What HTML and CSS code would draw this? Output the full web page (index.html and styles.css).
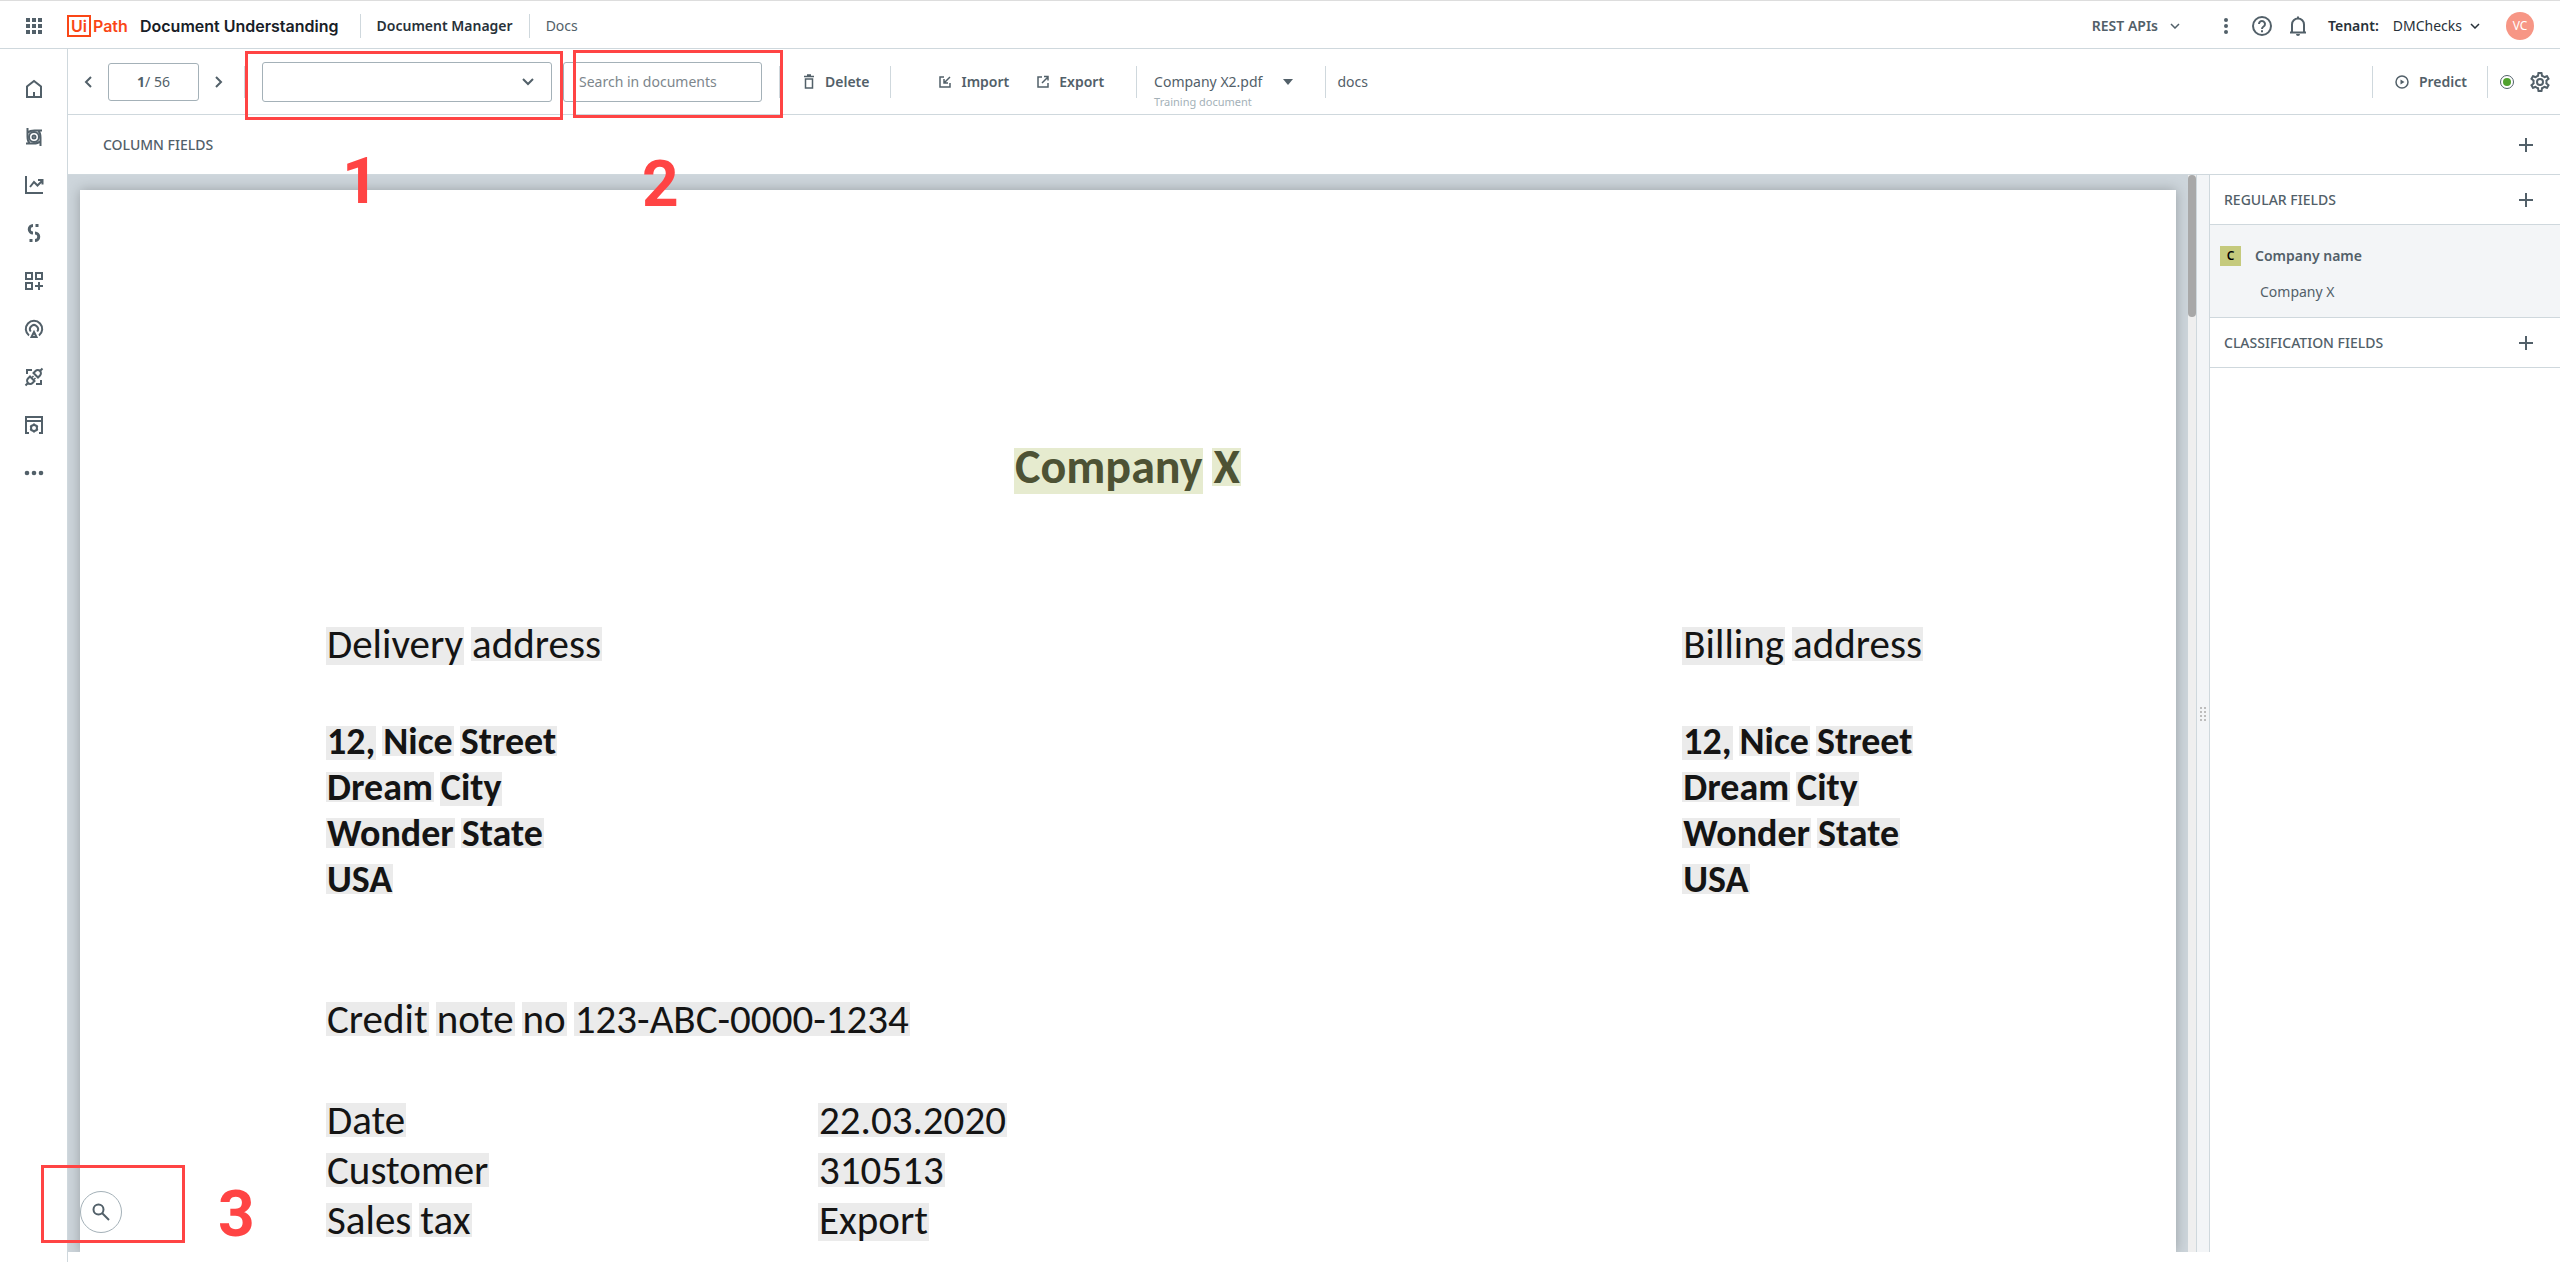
FILE: index.html
```html
<!DOCTYPE html>
<html lang="en">
<head>
<meta charset="utf-8">
<title>Document Understanding - Document Manager</title>
<link rel="stylesheet" href="styles.css">
</head>
<body>
<header class="header">
  <button class="icon-btn launcher" aria-label="Apps">
    <svg width="16" height="16" viewBox="0 0 16 16" fill="currentColor"><path d="M0 0h4v4H0zM6 0h4v4H6zM12 0h4v4h-4zM0 6h4v4H0zM6 6h4v4H6zM12 6h4v4h-4zM0 12h4v4H0zM6 12h4v4H6zM12 12h4v4h-4z"/></svg>
  </button>
  <a class="brand" href="#"><span class="brand-ui">Ui</span><span class="brand-path">Path</span><span class="brand-product">Document Understanding</span></a>
  <span class="rule rule-short"></span>
  <nav class="crumbs">
    <a class="crumb-current" href="#">Document Manager</a>
    <span class="rule rule-short"></span>
    <a class="crumb" href="#">Docs</a>
  </nav>
  <div class="header-right">
    <button class="menu-btn strong apis">REST APIs
      <svg width="10" height="6" viewBox="0 0 10 6" class="line"><path d="M1 1l4 4 4-4"/></svg></button>
    <button class="icon-btn" aria-label="More"><svg width="24" height="24" viewBox="0 0 24 24" fill="currentColor"><circle cx="12" cy="6" r="2"/><circle cx="12" cy="12" r="2"/><circle cx="12" cy="18" r="2"/></svg></button>
    <button class="icon-btn" aria-label="Help"><svg width="24" height="24" viewBox="0 0 24 24" class="line thick"><circle cx="12" cy="12" r="9"/><path d="M9 10a3 3 0 1 1 4.600 2.500C12.500 13.200 12 13.700 12 15M12 16.200v2"/></svg></button>
    <button class="icon-btn" aria-label="Notifications"><svg width="24" height="24" viewBox="0 0 24 24" class="line thick"><path d="M4 18.500h16M6 18v-7.500a6 6 0 0 1 12 0V18M12 2.500v2"/><path d="M10 20h4a2 2 0 0 1-4 0z" fill="currentColor" stroke="none"/></svg></button>
    <span class="tenant-label">Tenant:</span>
    <button class="menu-btn tenant">DMChecks
      <svg width="10" height="6" viewBox="0 0 10 6" class="line"><path d="M1 1l4 4 4-4"/></svg></button>
    <button class="avatar">VC</button>
  </div>
</header>

<div class="shell">
  <nav class="sidebar">
    <a href="#" aria-label="Home"><svg viewBox="0 0 24 24" class="line thick"><path d="M5 20V9.500L12 4l7 5.500V20zM12 15v5"/></svg></a>
    <a href="#" aria-label="Discover"><svg viewBox="0 0 24 24" class="line thick"><circle cx="12" cy="12" r="5"/><circle cx="12" cy="12" r="1.500"/><path d="M5.500 3v8.500c0 3 .500 5 2 6.500M20 5.500h-7.500c-3 0-5 .500-6.500 2M18.500 21v-8.500c0-3-.500-5-2-6.500M4 18.500h7.500c3 0 5-.500 6.500-2"/></svg></a>
    <a href="#" aria-label="Insights"><svg viewBox="0 0 24 24" class="line thick"><path d="M4 3v17h17M8 14l4-5 3.500 3.500L20 8M16 7h4.500v4.500"/></svg></a>
    <a href="#" aria-label="Processes"><svg viewBox="0 0 24 24" class="line heavy"><path d="M11 4.500a3.700 3.700 0 0 0 0 7.500M13 12a3.700 3.700 0 0 1 0 7.500M13.500 4.500h3M7.500 19.500h3"/></svg></a>
    <a href="#" aria-label="Apps"><svg viewBox="0 0 24 24" class="line thick"><path d="M4 4h6v6H4zM14 4h6v6h-6zM4 14h6v6H4zM17 13v8M13 17h8"/></svg></a>
    <a href="#" aria-label="Monitoring"><svg viewBox="0 0 24 24" class="line thick"><path d="M7 18.500a8.200 8.200 0 1 1 10 0M8.800 14.500a4 4 0 1 1 6.400 0M12 15l2.500 5h-5z"/></svg></a>
    <a href="#" aria-label="Integrations"><svg viewBox="0 0 24 24" class="line thick"><path d="M5 9V5h5M19 15v4h-5M3.500 20.500l2.500-2.500M8 11.500l4.500 4.500-2 2a3 3 0 0 1-4.500-4.500zM20.500 3.500L18 6M11.500 8l4.500 4.500 2-2a3 3 0 0 0-4.500-4.500z"/><path d="M10 12.500l1.500-1.500M12 14.500l1.500-1.500" stroke-width="1.500"/></svg></a>
    <a href="#" aria-label="Store"><svg viewBox="0 0 24 24" class="line thick"><path d="M7 20H4V4h16v16h-3M4 8h16"/><circle cx="12" cy="15" r="3"/><path d="M12 10.500v2M12 17.500v2M8.200 12.800l1.600 1M14.200 16.200l1.600 1M15.800 12.800l-1.600 1M9.800 16.200l-1.600 1"/></svg></a>
    <a href="#" aria-label="More"><svg viewBox="0 0 24 24" fill="currentColor"><circle cx="5" cy="12" r="2.300"/><circle cx="12" cy="12" r="2.300"/><circle cx="19" cy="12" r="2.300"/></svg></a>
  </nav>

  <div class="workspace">
    <div class="toolbar">
      <div class="pager">
        <button class="icon-btn" aria-label="Previous"><svg width="24" height="24" viewBox="0 0 24 24" class="line thick"><path d="M15 7l-5 5 5 5"/></svg></button>
        <div class="pager-box"><b>1</b>/ 56</div>
        <button class="icon-btn" aria-label="Next"><svg width="24" height="24" viewBox="0 0 24 24" class="line thick"><path d="M9 7l5 5-5 5"/></svg></button>
      </div>
      <span class="rule pager-rule"></span>
      <div class="filter">
        <select class="field" aria-label="Filter documents"><option></option></select>
        <svg class="filter-chevron line thick" width="12" height="8" viewBox="0 0 12 8"><path d="M1 1l5 5 5-5"/></svg>
        <span class="mark mark-filter"></span><span class="mark-no no-filter">1</span>
      </div>
      <div class="search">
        <input class="field" type="text" placeholder="Search in documents" aria-label="Search in documents">
        <span class="mark mark-search"></span><span class="mark-no no-search">2</span>
      </div>
      <span class="rule"></span>
      <button class="tool delete"><svg width="12" height="16" viewBox="0 0 12 16" class="line"><path d="M2.500 5h7v9h-7zM1 2.500h10M4 1h4"/></svg>Delete</button>
      <span class="rule"></span>
      <button class="tool import"><svg width="12" height="14" viewBox="0 0 12 14" class="line"><path d="M5 2H1v10h10V8M11 2L5.500 7.500M5 4v4h4"/></svg>Import</button>
      <button class="tool export"><svg width="12" height="14" viewBox="0 0 12 14" class="line"><path d="M5 2H1v10h10V8M5 8l6-6M7 1.500h4v4"/></svg>Export</button>
      <span class="rule"></span>
      <div class="file">
        <button class="menu-btn file-btn">Company X2.pdf<svg width="10" height="6" viewBox="0 0 10 6" fill="currentColor"><path d="M0 0h10L5 6z"/></svg></button>
        <span class="file-note">Training document</span>
      </div>
      <span class="rule"></span>
      <span class="file-tag">docs</span>
      <div class="toolbar-right">
        <span class="rule"></span>
        <button class="tool predict"><svg width="14" height="14" viewBox="0 0 14 14" class="line"><circle cx="7" cy="7" r="6"/><path d="M5.500 4.500v5l4-2.500z" fill="currentColor" stroke="none"/></svg>Predict</button>
        <span class="rule"></span>
        <span class="status"><svg width="14" height="14" viewBox="0 0 14 14"><circle cx="7" cy="7" r="6.500" fill="#fff" stroke="#526069"/><circle cx="7" cy="7" r="4" fill="#50a12e"/></svg></span>
        <button class="icon-btn" aria-label="Settings"><svg width="24" height="24" viewBox="0 0 24 24" fill="currentColor"><path d="M19.430 12.980c.04-.320.07-.640.07-.980 0-.340-.03-.660-.07-.980l2.110-1.650c.19-.150.240-.420.120-.640l-2-3.460a.5.5 0 0 0-.610-.220l-2.490 1c-.520-.400-1.080-.730-1.690-.980l-.380-2.650A.488.488 0 0 0 14 2h-4c-.250 0-.460.180-.490.420l-.380 2.650c-.610.250-1.170.590-1.690.980l-2.490-1a.5.5 0 0 0-.610.220l-2 3.460c-.130.220-.07.490.120.640l2.110 1.650c-.04.320-.07.650-.07.980s.03.660.07.980l-2.110 1.650c-.19.150-.240.420-.120.640l2 3.460c.12.220.39.300.61.220l2.490-1c.52.400 1.080.730 1.690.980l.38 2.650c.03.240.24.420.49.420h4c.25 0 .46-.18.490-.42l.38-2.650c.61-.25 1.170-.590 1.690-.98l2.490 1c.23.090.49 0 .61-.22l2-3.460c.12-.22.07-.49-.12-.64zm-1.980-1.710c.04.310.05.520.05.730s-.02.430-.05.730l-.14 1.130.89.700 1.080.840-.7 1.210-1.270-.51-1.040-.42-.9.680c-.43.320-.84.560-1.250.73l-1.060.43-.16 1.130-.2 1.350h-1.400l-.35-2.480-1.060-.43c-.43-.18-.83-.41-1.230-.71l-.91-.7-1.060.43-1.270.51-.7-1.210 1.970-1.540-.14-1.130c-.03-.31-.05-.54-.05-.74s.02-.43.05-.73l.14-1.130-1.970-1.540.7-1.210 1.270.51 1.040.42.9-.68c.43-.32.84-.56 1.250-.73l1.060-.43.36-2.480h1.390l.36 2.480 1.060.43c.43.180.83.410 1.230.71l.91.700 1.060-.43 1.270-.51.7 1.210-1.970 1.540zM12 8a4 4 0 1 0 0 8 4 4 0 0 0 0-8zm0 6a2 2 0 1 1 0-4 2 2 0 0 1 0 4z"/></svg></button>
      </div>
    </div>

    <div class="section-head column-fields">
      <h2>COLUMN FIELDS</h2>
      <button class="icon-btn" aria-label="Add column field"><svg width="24" height="24" viewBox="0 0 24 24" class="line thick"><path d="M12 5v14M5 12h14"/></svg></button>
    </div>

    <div class="content">
      <main class="viewer">
        <article class="page">
          <div class="row title"><span class="word desc">Company</span><span class="word">X</span></div>
          <div class="addresses">
            <section>
              <div class="row"><span class="word desc">Delivery</span><span class="word">address</span></div>
              <div class="address">
                <div class="row"><span class="word desc">12,</span><span class="word">Nice</span><span class="word">Street</span></div>
                <div class="row"><span class="word">Dream</span><span class="word desc">City</span></div>
                <div class="row"><span class="word">Wonder</span><span class="word">State</span></div>
                <div class="row"><span class="word">USA</span></div>
              </div>
            </section>
            <section class="billing">
              <div class="row"><span class="word desc">Billing</span><span class="word">address</span></div>
              <div class="address">
                <div class="row"><span class="word desc">12,</span><span class="word">Nice</span><span class="word">Street</span></div>
                <div class="row"><span class="word">Dream</span><span class="word desc">City</span></div>
                <div class="row"><span class="word">Wonder</span><span class="word">State</span></div>
                <div class="row"><span class="word">USA</span></div>
              </div>
            </section>
          </div>
          <div class="row note"><span class="word">Credit</span><span class="word">note</span><span class="word">no</span><span class="word">123-ABC-0000-1234</span></div>
          <table class="details">
            <tr><th scope="row"><div class="row"><span class="word">Date</span></div></th><td><div class="row"><span class="word">22.03.2020</span></div></td></tr>
            <tr><th scope="row"><div class="row"><span class="word">Customer</span></div></th><td><div class="row"><span class="word">310513</span></div></td></tr>
            <tr><th scope="row"><div class="row"><span class="word">Sales</span><span class="word">tax</span></div></th><td><div class="row"><span class="word desc">Export</span></div></td></tr>
          </table>
        </article>
        <div class="scroll"><div class="scroll-thumb"></div></div>
        <button class="zoom-btn" aria-label="Zoom"><svg width="18" height="18" viewBox="0 0 18 18" class="line thick"><circle cx="6.500" cy="6.500" r="5"/><path d="M10 10l7 7"/></svg></button>
        <span class="mark mark-zoom"></span><span class="mark-no no-zoom">3</span>
      </main>
      <div class="resizer"><svg width="6" height="14" viewBox="0 0 6 14" fill="#bdbdbd"><path d="M0 0h2v2H0zM4 0h2v2H4zM0 4h2v2H0zM4 4h2v2H4zM0 8h2v2H0zM4 8h2v2H4zM0 12h2v2H0zM4 12h2v2H4z"/></svg></div>
      <aside class="fields">
        <div class="section-head">
          <h2>REGULAR FIELDS</h2>
          <button class="icon-btn" aria-label="Add regular field"><svg width="24" height="24" viewBox="0 0 24 24" class="line thick"><path d="M12 5v14M5 12h14"/></svg></button>
        </div>
        <div class="field-card">
          <div class="field-name"><span class="field-key">C</span>Company name</div>
          <div class="field-value">Company X</div>
        </div>
        <div class="section-head">
          <h2>CLASSIFICATION FIELDS</h2>
          <button class="icon-btn" aria-label="Add classification field"><svg width="24" height="24" viewBox="0 0 24 24" class="line thick"><path d="M12 5v14M5 12h14"/></svg></button>
        </div>
      </aside>
    </div>
  </div>
</div>
</body>
</html>
```
FILE: styles.css
```css
* { box-sizing: border-box; }
:root {
  --ink: #526069;
  --dark: #273139;
  --border: #cfd8dd;
  --red: #ff4444;
}
body {
  margin: 0;
  height: 100vh;
  display: flex;
  flex-direction: column;
  overflow: hidden;
  background: #fff;
  color: var(--ink);
  font: 14px/20px "Noto Sans", sans-serif;
}
button { margin: 0; padding: 0; border: 0; background: none; color: inherit; font: inherit; }
a { color: inherit; text-decoration: none; }
svg { display: block; flex: none; }
h2 { margin: 0; font-size: 14px; font-weight: 500; }
.line { fill: none; stroke: currentColor; stroke-width: 1.5; }
.thick { stroke-width: 2; }
.heavy { stroke-width: 3; }
.icon-btn { display: flex; flex: none; }
.rule { flex: none; width: 1px; height: 32px; background: var(--border); }
.rule-short { height: 24px; }

/* header */
.header {
  flex: none;
  display: flex;
  align-items: center;
  height: 49px;
  padding: 2px 26px 0;
  border-top: 1px solid #ddd;
  border-bottom: 1px solid var(--border);
}
.brand {
  display: flex;
  align-items: center;
  margin: 0 21px 0 25px;
  font: 600 16px/20px Inter, sans-serif;
}
.brand-ui { border: 2px solid #fa4616; padding: 0 2px; line-height: 18px; color: #fa4616; }
.brand-path { width: 49px; padding-left: 2px; color: #fa4616; }
.brand-product { color: #182027; }
.crumbs { display: flex; align-items: center; gap: 16px; margin-left: 16px; }
.crumb-current { font-weight: 600; color: var(--dark); }
.header-right { display: flex; align-items: center; gap: 12px; margin-left: auto; }
.menu-btn { display: flex; align-items: center; gap: 12px; }
.strong { font-weight: 600; }
.apis { margin-right: 22px; }
.tenant-label { margin-left: 6px; font-weight: 600; color: var(--dark); }
.tenant { gap: 8px; margin: 0 14px 0 2px; color: var(--dark); }
.avatar {
  width: 28px;
  height: 28px;
  border-radius: 50%;
  background: #f79685;
  color: #fff;
  font-size: 12px;
}

/* frame */
.shell { flex: 1; display: flex; min-height: 0; }
.sidebar {
  flex: none;
  width: 68px;
  padding-top: 16px;
  border-right: 1px solid var(--border);
}
.sidebar a { display: flex; align-items: center; justify-content: center; height: 48px; }
.sidebar svg { width: 24px; height: 24px; }
.workspace { flex: 1; display: flex; flex-direction: column; min-width: 0; }

/* toolbar */
.toolbar {
  flex: none;
  display: flex;
  align-items: center;
  height: 66px;
  padding: 0 8px;
  border-bottom: 1px solid var(--border);
}
.pager { display: flex; align-items: center; gap: 8px; }
.pager-box {
  width: 91px;
  height: 38px;
  border: 1px solid #a4b1b8;
  border-radius: 3px;
  line-height: 36px;
  text-align: center;
}
.pager-rule { margin: 0 17px 0 13px; }
.field {
  display: block;
  width: 100%;
  height: 40px;
  border: 1px solid #a4b1b8;
  border-radius: 3px;
  background: #fff;
  padding: 0 15px;
  appearance: none;
  color: var(--ink);
  font: inherit;
}
.field::placeholder { color: #7d868c; }
.filter { position: relative; width: 290px; }
.filter-chevron { position: absolute; right: 18px; top: 16px; }
.search { position: relative; width: 199px; margin: 0 17px 0 11px; }
.tool { display: flex; align-items: center; gap: 10px; font-weight: 600; }
.delete { margin: 0 21px 0 23px; }
.import { margin-left: 48px; }
.export { margin: 0 32px 0 28px; }
.file { position: relative; margin: 0 32px 0 17px; }
.file-btn { gap: 21px; }
.file-note {
  position: absolute;
  top: 22px;
  left: 0;
  font-size: 11px;
  line-height: 16px;
  white-space: nowrap;
  color: #a4b1b8;
}
.file-tag { margin-left: 11px; }
.toolbar-right { display: flex; align-items: center; margin-left: auto; }
.predict { margin: 0 20px 0 22px; }
.status { margin: 0 14px 0 12px; }

/* section headings */
.section-head {
  display: flex;
  align-items: center;
  justify-content: space-between;
  height: 50px;
  padding: 0 22px 0 14px;
  border-bottom: 1px solid var(--border);
}
.column-fields { flex: none; height: 60px; padding-left: 35px; }

/* document viewer */
.content { flex: 1; display: flex; min-height: 0; padding-bottom: 10px; }
.viewer {
  position: relative;
  flex: 1;
  display: flex;
  gap: 12px;
  padding: 15px 0 0 12px;
  min-width: 0;
  background: #cdd5db;
}
.page {
  flex: 1;
  padding: 258px 253px 0 246px;
  background: #fff;
  box-shadow: 0 0 12px rgba(0, 0, 0, .25);
  clip-path: inset(-15px -12px 0 -12px);
  overflow: hidden;
  color: #141414;
  font: 41px/34px Carlito, Lato, sans-serif;
}
.row { display: flex; align-items: baseline; gap: 7px; height: 38px; }
.word { padding: 0 1px; background: #ebebeb; }
.desc { padding-bottom: 4px; }
.title {
  justify-content: center;
  gap: 9px;
  height: 46px;
  margin: 0 0 133px 6px;
  color: #4d5234;
  font-size: 48px;
  font-weight: 700;
  line-height: 38px;
}
.title .word { background: #e6ebcf; }
.title .desc { padding-bottom: 8px; }
.addresses { display: flex; justify-content: space-between; }
.address { margin-top: 61px; font-size: 38px; font-weight: 700; line-height: 30px; }
.address .row { gap: 6px; height: 46px; }
.note { margin: 92px 0 63px; }
.details { border-collapse: collapse; }
.details th { width: 492px; padding: 0; text-align: left; font-weight: 400; }
.details td { padding: 0; }
.details .row { height: 50px; }
.scroll { flex: none; width: 8px; margin-top: -15px; background: #efefef; }
.scroll-thumb { height: 142px; border-radius: 4px; background: #a8a8a8; }
.zoom-btn {
  position: absolute;
  left: 12px;
  bottom: 19px;
  display: flex;
  align-items: center;
  justify-content: center;
  width: 42px;
  height: 42px;
  border: 1px solid #a4b1b8;
  border-radius: 50%;
  background: #fff;
}
.resizer {
  flex: none;
  display: flex;
  align-items: center;
  justify-content: center;
  width: 14px;
  border: solid var(--border);
  border-width: 0 1px;
  background: #f3f5f7;
}

/* fields panel */
.fields { flex: none; width: 350px; }
.field-card {
  height: 93px;
  padding: 21px 10px 0;
  border-bottom: 1px solid var(--border);
  background: #f3f5f7;
}
.field-name { display: flex; align-items: center; gap: 14px; font-weight: 600; }
.field-key {
  width: 21px;
  background: #c5ca7d;
  color: #000;
  font-size: 12px;
  text-align: center;
}
.field-value { margin: 16px 0 0 40px; }

/* numbered callouts */
.mark, .mark-no { position: absolute; z-index: 2; pointer-events: none; }
.mark { border: 3px solid var(--red); }
.mark-no { color: var(--red); font: 700 64px/64px Roboto, sans-serif; }
.mark-filter { left: -17px; top: -11px; width: 318px; height: 69px; }
.no-filter { left: 80px; top: 88px; }
.mark-search { left: 10px; top: -12px; width: 210px; height: 68px; }
.no-search { left: 79px; top: 91px; }
.mark-zoom { left: -27px; bottom: 9px; width: 144px; height: 78px; }
.no-zoom { left: 150px; bottom: 5px; }
```
